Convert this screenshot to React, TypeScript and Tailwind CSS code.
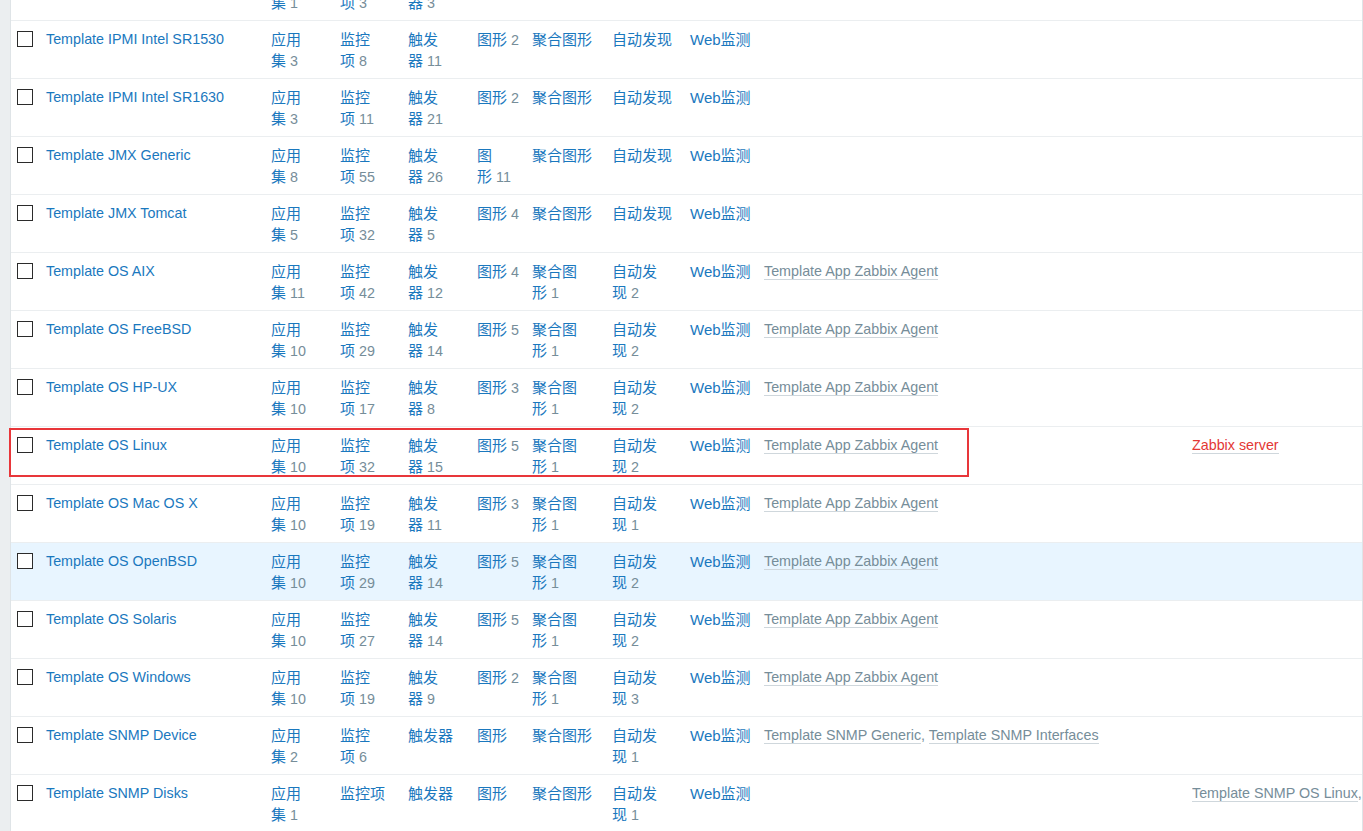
import React from "react";

type Cell = { t: string; n?: string; s?: number };

type Row = {
  name: string;
  cells: Cell[];
  linked?: string[];
  linkedTo?: { text: string; red?: boolean }[];
  hl?: boolean;
  boxed?: boolean;
};

const std = (app: string, items: string, trig: string, gr: Cell, scr: Cell, disc: Cell): Cell[] => [
  { t: "应用集", n: app, s: 2 },
  { t: "监控项", n: items, s: 2 },
  { t: "触发器", n: trig, s: 2 },
  gr,
  scr,
  disc,
  { t: "Web监测" },
];

const osRow = (name: string, app: string, items: string, trig: string, gr: string, scr: string, disc: string): Row => ({
  name,
  cells: std(app, items, trig, { t: "图形", n: gr }, { t: "聚合图形", n: scr, s: 3 }, { t: "自动发现", n: disc, s: 3 }),
  linked: ["Template App Zabbix Agent"],
});

const rows: Row[] = [
  {
    name: "Template ICMP Ping",
    cells: std("1", "3", "3", { t: "图形" }, { t: "聚合图形" }, { t: "自动发现" }),
  },
  {
    name: "Template IPMI Intel SR1530",
    cells: std("3", "8", "11", { t: "图形", n: "2" }, { t: "聚合图形" }, { t: "自动发现" }),
  },
  {
    name: "Template IPMI Intel SR1630",
    cells: std("3", "11", "21", { t: "图形", n: "2" }, { t: "聚合图形" }, { t: "自动发现" }),
  },
  {
    name: "Template JMX Generic",
    cells: std("8", "55", "26", { t: "图形", n: "11", s: 1 }, { t: "聚合图形" }, { t: "自动发现" }),
  },
  {
    name: "Template JMX Tomcat",
    cells: std("5", "32", "5", { t: "图形", n: "4" }, { t: "聚合图形" }, { t: "自动发现" }),
  },
  osRow("Template OS AIX", "11", "42", "12", "4", "1", "2"),
  osRow("Template OS FreeBSD", "10", "29", "14", "5", "1", "2"),
  osRow("Template OS HP-UX", "10", "17", "8", "3", "1", "2"),
  { ...osRow("Template OS Linux", "10", "32", "15", "5", "1", "2"), linkedTo: [{ text: "Zabbix server", red: true }], boxed: true },
  osRow("Template OS Mac OS X", "10", "19", "11", "3", "1", "1"),
  { ...osRow("Template OS OpenBSD", "10", "29", "14", "5", "1", "2"), hl: true },
  osRow("Template OS Solaris", "10", "27", "14", "5", "1", "2"),
  osRow("Template OS Windows", "10", "19", "9", "2", "1", "3"),
  {
    name: "Template SNMP Device",
    cells: [
      { t: "应用集", n: "2", s: 2 },
      { t: "监控项", n: "6", s: 2 },
      { t: "触发器" },
      { t: "图形" },
      { t: "聚合图形" },
      { t: "自动发现", n: "1", s: 3 },
      { t: "Web监测" },
    ],
    linked: ["Template SNMP Generic", "Template SNMP Interfaces"],
  },
  {
    name: "Template SNMP Disks",
    cells: [
      { t: "应用集", n: "1", s: 2 },
      { t: "监控项" },
      { t: "触发器" },
      { t: "图形" },
      { t: "聚合图形" },
      { t: "自动发现", n: "1", s: 3 },
      { t: "Web监测" },
    ],
    linkedTo: [{ text: "Template SNMP OS Linux" }, { text: "Template SNMP OS Solaris" }],
  },
];

function MetricCell({ c }: { c: Cell }) {
  const count = c.n ? <span className="text-[#768d99] text-[14.3px]"> {c.n}</span> : null;
  if (c.s) {
    return (
      <div className="whitespace-nowrap">
        <div className="text-[#1a78be] text-[15px]">{c.t.slice(0, c.s)}</div>
        <div>
          <span className="text-[#1a78be] text-[15px]">{c.t.slice(c.s)}</span>
          {count}
        </div>
      </div>
    );
  }
  return (
    <div className="whitespace-nowrap">
      <span className="text-[#1a78be] text-[15px]">{c.t}</span>
      {count}
    </div>
  );
}

function Checkbox() {
  return <div className="ml-[6px] mt-[2px] w-[16px] h-[16px] border border-[#2b2b2b] bg-white" />;
}

function TableRow({ r }: { r: Row }) {
  return (
    <div
      className={
        "relative grid grid-cols-[35px_225px_69px_68px_69px_55px_80px_78px_74px_428px_minmax(0,1fr)] border-t border-[#ebeef0] pt-[8px] pb-[7px] leading-[21px] h-[58px] " +
        (r.hl ? "bg-[#e8f5ff]" : "bg-white")
      }
    >
      <div>
        <Checkbox />
      </div>
      <div className="text-[#1a78be] whitespace-nowrap">{r.name}</div>
      {r.cells.map((c, i) => (
        <MetricCell key={i} c={c} />
      ))}
      <div className="whitespace-nowrap text-[#768d99]">
        {r.linked?.map((l, i) => (
          <React.Fragment key={i}>
            {i > 0 && <span>, </span>}
            <span className="border-b border-[#cfd7dc]">{l}</span>
          </React.Fragment>
        ))}
      </div>
      <div className="whitespace-nowrap overflow-hidden text-[#768d99]">
        {r.linkedTo?.map((l, i) => (
          <React.Fragment key={i}>
            <span className={"border-b border-[#cfd7dc] " + (l.red ? "text-[#e33734]" : "")}>{l.text}</span>
            {r.linkedTo && i < r.linkedTo.length - 1 && <span>, </span>}
          </React.Fragment>
        ))}
      </div>
      {r.boxed && (
        <div className="absolute left-[-2px] top-[1px] w-[960px] h-[49px] border-2 border-[#e8363a] pointer-events-none" />
      )}
    </div>
  );
}

export default function App() {
  return (
    <div
      className="w-[1363px] h-[831px] overflow-hidden bg-[#ebeef0] flex text-[14.3px]"
      style={{ fontFamily: '"Liberation Sans", Arial, "Noto Sans CJK SC", sans-serif' }}
    >
      <div className="w-[10px] shrink-0" />
      <div className="flex-1 bg-white border-l border-r border-[#dfe4e7] h-full">
        <div className="-mt-[38px]">
          {rows.map((r, i) => (
            <TableRow key={i} r={r} />
          ))}
        </div>
      </div>
    </div>
  );
}
